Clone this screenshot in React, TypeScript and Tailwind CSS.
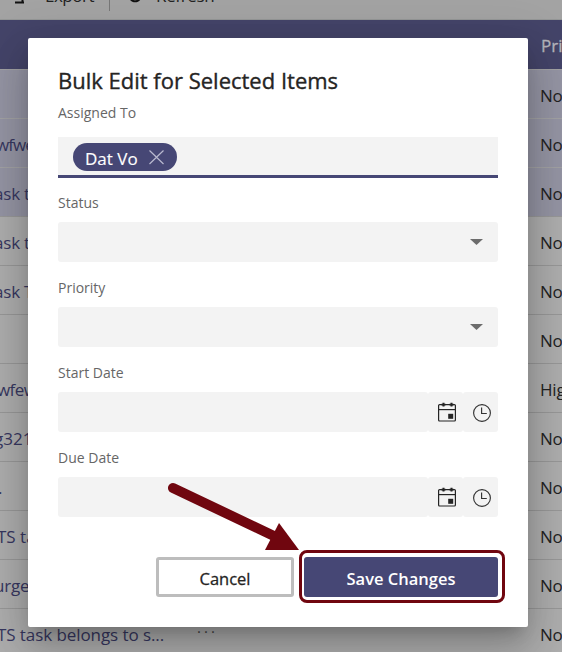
import React from "react";

const rows = [
  { name: "", shift: "", priority: "No", selected: true },
  { name: "wfwe", shift: "-ml-[4px] tracking-[-0.9px]", priority: "No", selected: true },
  { name: "ask t", shift: "-ml-[6px] tracking-[-0.2px]", priority: "No", selected: true },
  { name: "ask t", shift: "-ml-[6px] tracking-[-0.2px]", priority: "No", selected: false },
  { name: "ask T", shift: "-ml-[6px] tracking-[-0.2px]", priority: "No", selected: false },
  { name: "", shift: "", priority: "No", selected: false },
  { name: "wfew", shift: "-ml-[3px] tracking-[-0.6px]", priority: "Hig", selected: false },
  { name: "g321", shift: "-ml-[6px]", priority: "No", selected: false },
  { name: ".", shift: "-ml-[2px]", priority: "No", selected: false },
  { name: "TS task", shift: "-ml-[3px]", priority: "No", selected: false },
  { name: "urgec", shift: "-ml-[6px] tracking-[-0.2px]", priority: "No", selected: false },
  { name: "TS task belongs to s...", shift: "-ml-[3px] tracking-[-0.08px]", priority: "No", selected: false },
];

function CalendarIcon() {
  return (
    <svg width="20" height="20" viewBox="0 0 20 20" fill="none" stroke="#242424">
      <rect x="1.6" y="2.6" width="16.8" height="16.4" rx="1" strokeWidth="1.2" />
      <path d="M1.5 7.6h17" strokeWidth="1.2" />
      <path d="M6.5 .8v3.6M14.5 .8v3.6" strokeWidth="2" />
      <path d="M4.5 2.7h4M12.5 2.7h4" strokeWidth="1.8" />
      <rect x="11.2" y="11.8" width="5" height="5" fill="#242424" stroke="none" />
    </svg>
  );
}

function ClockIcon() {
  return (
    <svg width="20" height="20" viewBox="0 0 20 20" fill="none" stroke="#333" strokeWidth="1.15">
      <circle cx="10" cy="10" r="8.4" />
      <path d="M9.6 4.5v6h5.2" />
    </svg>
  );
}

function Label({ children }: { children: React.ReactNode }) {
  return (
    <div className="h-5 text-[14px] leading-5 whitespace-nowrap text-[#666]">{children}</div>
  );
}

function SelectField({ label }: { label: string }) {
  return (
    <div className="h-[85px]">
      <Label>{label}</Label>
      <div className="mt-[9px] flex h-10 items-center justify-end rounded-[3px] bg-[#f3f3f3] pr-[15px]">
        <svg width="13" height="6" viewBox="0 0 13 6">
          <path d="M0 0h13L6.5 6z" fill="#6c6c6c" />
        </svg>
      </div>
    </div>
  );
}

function DateField({ label }: { label: string }) {
  return (
    <div className="h-[85px]">
      <Label>{label}</Label>
      <div className="mt-[9px] flex h-10">
        <div className="flex-1 rounded-[3px] bg-[#f3f3f3]" />
        <div className="flex w-[35px] items-center justify-center rounded-[3px] bg-[#f3f3f3] pl-0.5">
          <CalendarIcon />
        </div>
        <div className="flex w-[35px] items-center justify-center rounded-[3px] bg-[#f3f3f3] pl-0.5 pt-0.5">
          <ClockIcon />
        </div>
      </div>
    </div>
  );
}

export default function App() {
  return (
    <div className="relative h-[652px] w-[562px] overflow-hidden bg-[#aeaeae] font-['Open_Sans','Noto_Sans',sans-serif]">
      <div className="flex h-5 overflow-hidden border-b border-[#949696] bg-[#a3a3a3] text-[17px] leading-[24px] text-[#222]">
        <div className="mt-[-17px] flex h-[26px] items-center">
          <svg className="ml-[14px]" width="11" height="16" viewBox="0 0 11 16" fill="none" stroke="#111" strokeWidth="2">
            <path d="M5.5 1v10M2 5l3.5-4L9 5M1 14.5h9M8.5 10v4" />
          </svg>
          <span className="ml-[20px] w-[64px] tracking-[-0.5px]">Export</span>
          <span className="mt-1 h-[26px] w-px bg-[#777]" />
          <svg className="ml-[18px]" width="14" height="16" viewBox="0 0 14 16" fill="none" stroke="#111" strokeWidth="2">
            <path d="M11.5 4.5A5.5 5.5 0 1 0 12.5 9M12 1v4H8" />
          </svg>
          <span className="ml-[14px] tracking-[-0.35px]">Refresh</span>
        </div>
      </div>
      <div className="flex h-[49px] items-center justify-end bg-[#444469] text-[17px] text-[#b5b5bb]">
        <span className="w-[21px] pt-0.5 whitespace-nowrap [-webkit-text-stroke:0.3px_#b5b5bb]">Pri</span>
      </div>
      {rows.map((row, i) => (
        <div
          key={i}
          className={`flex h-[49px] items-center border-t text-[17px] whitespace-nowrap ${
            row.selected ? "border-[#a2a2a4] bg-[#9595a4]" : "border-[#989898] bg-[#aeaeae]"
          }`}
        >
          <span className="w-[197px] pt-[3px] text-[#373760]">
            <span className={row.shift}>{row.name}</span>
          </span>
          <span className="mt-[-3px] w-[343px] text-[15px] tracking-[3px] text-[#444]">{i === 11 ? "···" : ""}</span>
          <span className="w-[22px] pt-[3px] tracking-[-0.2px] text-[#222]">{row.priority}</span>
        </div>
      ))}

      <div className="absolute top-[38px] left-[28px] h-[589px] w-[500px] rounded-[2px] bg-white px-[30px] pt-7 shadow-[0_11px_15px_-7px_rgba(0,0,0,0.2),0_24px_38px_3px_rgba(0,0,0,0.14),0_9px_46px_8px_rgba(0,0,0,0.12)]">
        <h1 className="h-[30px] text-[22px] leading-[29px] whitespace-nowrap text-[#252423] [-webkit-text-stroke:0.35px_#252423]">
          Bulk Edit for Selected Items
        </h1>
        <div className="mt-[7px] h-[90px]">
          <Label>Assigned To</Label>
          <div className="mt-[14px] flex h-[41px] items-center border-b-[3px] border-[#464775] bg-[#f3f3f3] pl-[15px] pt-px">
            <div className="flex h-7 w-[104px] items-center rounded-full bg-[#464775] pl-3 text-[17px] text-white">
              <span className="w-[63px] pt-1 whitespace-nowrap [-webkit-text-stroke:0.15px_white]">Dat Vo</span>
              <svg width="16" height="16" viewBox="0 0 16 16" fill="none" stroke="#b9b9cf" strokeWidth="1.2">
                <path d="M1.5 1.5l14 13.5M15.5 1.5L1.5 15" />
              </svg>
            </div>
          </div>
        </div>
        <SelectField label="Status" />
        <SelectField label="Priority" />
        <DateField label="Start Date" />
        <DateField label="Due Date" />
        <div className="mt-6 flex justify-end gap-[10px]">
          <button className="h-10 w-[138px] rounded-[3px] border-[3px] border-[#bdbdbd] bg-white pt-1 text-[16.5px] text-[#252423] [-webkit-text-stroke:0.3px_#252423]">
            Cancel
          </button>
          <button className="relative h-10 w-[194px] rounded-[3px] bg-[#464775] pt-1 text-[16.5px] font-semibold text-white">
            Save Changes
            <span className="absolute -top-[7px] -left-[5px] h-[53px] w-[206px] rounded-[8px] border-[3px] border-[#70060f]" />
          </button>
        </div>
      </div>

      <svg className="pointer-events-none absolute top-0 left-0" width="562" height="652" viewBox="0 0 562 652">
        <path d="M173 488L276 537" stroke="#70060f" strokeWidth="10" strokeLinecap="round" />
        <path d="M279 523L299 550L265 550z" fill="#70060f" />
      </svg>
    </div>
  );
}
